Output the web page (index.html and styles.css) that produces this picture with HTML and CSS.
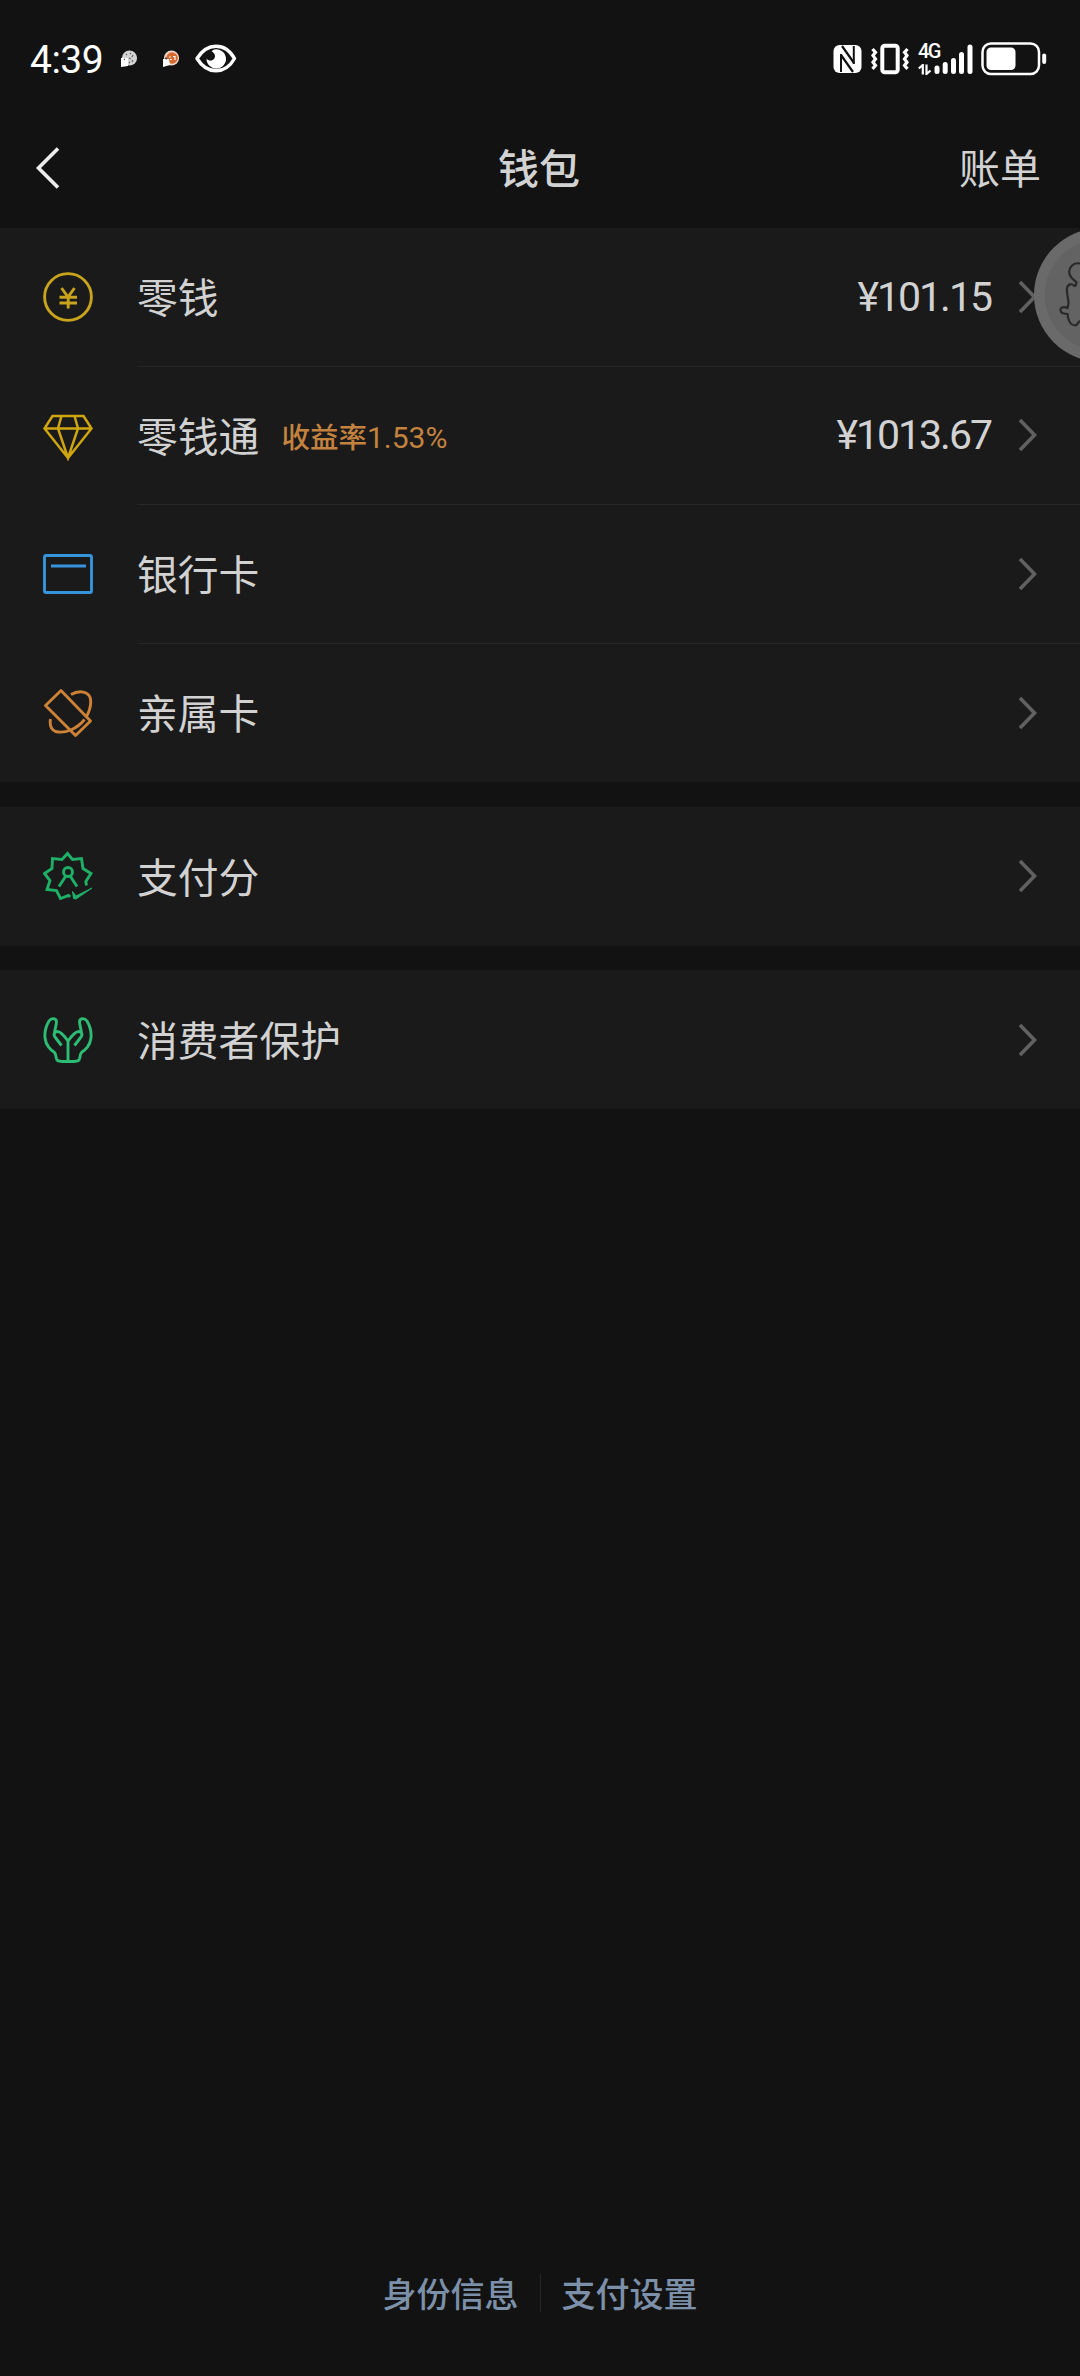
FILE: index.html
```
<!DOCTYPE html>
<html lang="zh-CN">
<head>
    <meta charset="UTF-8">
    <meta name="viewport" content="width=device-width, initial-scale=1.0">
    <title>钱包</title>
    <link rel="stylesheet" href="styles.css">
</head>
<body>
    <svg class="defs" width="0" height="0">
        <symbol id="arrow" viewBox="0 0 20 34">
            <path d="M2 2 L16.500 17 L2 32" fill="none" stroke="currentColor" stroke-width="3.600"/>
        </symbol>
    </svg>

    <div class="screen">
        <div class="status-bar">
            <div class="status-left">
                <span class="time">4:39</span>
                <svg class="notify" width="18" height="18" viewBox="0 0 18 18">
                    <circle cx="9.500" cy="8" r="7.600" fill="#d4d4d4"/>
                    <path d="M1 8h7v8l-7 1z" fill="#fff"/>
                    <path d="M6 4l1 1M10 3l1 1M13 5l-1 2M9 8l2 1M13 10l-1 2M4 9l1 1M9 12l1 1" stroke="#666" stroke-width="1.300"/>
                </svg>
                <svg class="notify" width="18" height="18" viewBox="0 0 18 18">
                    <circle cx="9.500" cy="8" r="7.600" fill="#f0d8cc"/>
                    <circle cx="10" cy="8" r="5.800" fill="#d9682e"/>
                    <path d="M1 9h6l1 6-7 2z" fill="#fff"/>
                    <path d="M7 7h2M11 6.500h2v3.500M8 9.500h2" stroke="#fff" stroke-width="1.200" fill="none"/>
                    <path d="M3 8l2 1" stroke="#444" stroke-width="1.500"/>
                </svg>
                <svg class="eye" width="42" height="30" viewBox="0 0 42 30">
                    <path d="M2 14.500C7 6.500 13.500 2.200 21 2.200S35 6.500 39.500 14.500C35 22.500 28.500 26.800 21 26.800S7 22.500 2 14.500Z" fill="none" stroke="#fff" stroke-width="3.400" stroke-linejoin="round"/>
                    <path d="M19 5.500A9.700 9.700 0 1 1 11.600 14.500C13.500 17.800 18.800 17 19.800 13.500C20.700 10.500 18.600 8.500 16.500 7.200Z" fill="#fff"/>
                </svg>
            </div>
            <div class="status-right">
                <svg width="29" height="30" viewBox="0 0 29 30">
                    <rect x="0.500" y="1" width="28" height="28" rx="6" fill="#fff"/>
                    <path d="M8 10V28M20.800 2V20" stroke="#121212" stroke-width="2"/>
                    <path d="M9 2L21 19M8 11L20 28" stroke="#121212" stroke-width="2.200"/>
                </svg>
                <svg class="vibrate" width="38" height="32" viewBox="0 0 38 32">
                    <rect x="11.300" y="2.800" width="15.400" height="26.400" rx="2.500" fill="none" stroke="#fff" stroke-width="4"/>
                    <path d="M1.500 6l3 3.300-2.500 3.300 2.500 3.300-2.500 3.300 2.500 3.300-3 3.300M36.500 6l-3 3.300 2.500 3.300-2.500 3.300 2.500 3.300-2.500 3.300 3 3.300" fill="none" stroke="#fff" stroke-width="3.200"/>
                </svg>
                <div class="signal">
                    <div class="network">
                        <span class="network-type">4G</span>
                        <svg width="14" height="11" viewBox="0 0 14 11">
                            <path d="M0.800 4.500L4.800 1V10.500M8.500 0.500V10L12.500 6.500" fill="none" stroke="#fff" stroke-width="2.200"/>
                        </svg>
                    </div>
                    <svg width="40" height="32" viewBox="0 0 40 32">
                        <path d="M4 25V28.500M12.200 21.500V28.500M20.500 17.500V28.500M28.500 11.500V28.500M37 4V28.500" stroke="#fff" stroke-width="5" stroke-linecap="round"/>
                    </svg>
                </div>
                <svg class="battery" width="66" height="34" viewBox="0 0 66 34">
                    <rect x="1.500" y="1.500" width="56.500" height="30.500" rx="8.500" fill="none" stroke="#fff" stroke-width="2.500"/>
                    <rect x="5.500" y="5.500" width="29" height="22.500" rx="4.500" fill="#fff"/>
                    <path d="M63.200 13.500V20" stroke="#fff" stroke-width="4" stroke-linecap="round"/>
                </svg>
            </div>
        </div>

        <header class="nav">
            <svg class="back" width="26" height="44" viewBox="0 0 26 44">
                <path d="M23 2.500L3.500 22L23 41.500" fill="none" stroke="#ededed" stroke-width="3.600"/>
            </svg>
            <h1 class="title">钱包</h1>
            <a class="bill">账单</a>
        </header>

        <main>
            <section class="group">
                <div class="row">
                    <svg class="icon" viewBox="0 0 50 50" stroke="#c8a41c">
                        <circle cx="25" cy="25" r="23.400"/>
                        <path d="M18.500 16l6.500 9 6.500-9M16.500 25.300h17.500M16.500 31h17.500M25.200 25v11.500"/>
                    </svg>
                    <div class="cell">
                        <span class="label">零钱</span>
                        <span class="amount">¥101.15</span>
                        <svg class="arrow"><use href="#arrow"/></svg>
                    </div>
                </div>
                <div class="row">
                    <svg class="icon" viewBox="0 0 50 50" stroke="#cfa60f">
                        <path d="M9.500 5h31l8 12.500L25 47 1.500 17.500zM1.500 17.500h47M18.500 5l-3.500 12.500 10 29.500 10-29.500L31.500 5" stroke-width="2.500"/>
                    </svg>
                    <div class="cell">
                        <span class="label">零钱通</span>
                        <span class="tag">收益率<span class="rate">1.53%</span></span>
                        <span class="amount">¥1013.67</span>
                        <svg class="arrow"><use href="#arrow"/></svg>
                    </div>
                </div>
                <div class="row">
                    <svg class="icon" viewBox="0 0 50 50" stroke="#3594dc">
                        <rect x="1.500" y="6.500" width="47" height="37" rx="1.500"/>
                        <path d="M8 17h35"/>
                    </svg>
                    <div class="cell">
                        <span class="label">银行卡</span>
                        <svg class="arrow"><use href="#arrow"/></svg>
                    </div>
                </div>
                <div class="row">
                    <svg class="icon" viewBox="0 0 50 50" stroke="#cd8237">
                        <path d="M18 2.500L47.500 33 32.500 47.500 2.500 17.500z" stroke-linejoin="round"/>
                        <path d="M28 6.500C36 2 46 3 47.500 11C48.500 18 46.500 23 43.500 28.500M41.500 31.500C34 41 22 46 12.500 43.500C8 41.500 6.500 37 7.500 31"/>
                    </svg>
                    <div class="cell">
                        <span class="label">亲属卡</span>
                        <svg class="arrow"><use href="#arrow"/></svg>
                    </div>
                </div>
            </section>

            <section class="group">
                <div class="row">
                    <svg class="icon" viewBox="0 0 50 50" stroke="#1fb067">
                        <path d="M43.500 34.500L42.800 30.500L48 22.500L40 17.500L38.500 7.500L29.500 8.500L24.500 2.500L19 8.500L9.500 7.500L9 17.500L1.500 22.500L7 29.500L4 38.500L13.500 39.500L17.500 47.500L25.500 44.500L27 46"/>
                        <circle cx="25" cy="21" r="4.500"/>
                        <path d="M22.500 25.500L16 35.500M27.500 25.500L34 35.500"/>
                        <path d="M29.500 40.500L33 45L49 37L33 48L30.500 47.500z" fill="#1fb067" stroke-width="1"/>
                    </svg>
                    <div class="cell">
                        <span class="label">支付分</span>
                        <svg class="arrow"><use href="#arrow"/></svg>
                    </div>
                </div>
            </section>

            <section class="group">
                <div class="row">
                    <svg class="icon" viewBox="0 0 50 50" stroke="#2cbc73">
                        <path d="M25 46.500V26C21 20.500 17 16.500 14.500 16.500C11.500 16.500 10 19.500 12 22L18.500 30.500M11.500 19.500C11.500 14 13.500 10 13.500 7C13.500 3 8.500 2.500 6 6C3 11 1.500 17 2 23C3 31 7.500 34.500 11.500 37.500C13.500 39.500 12.500 43 14 45C15.500 46.800 19 46.500 25 46.500"/>
                        <path d="M25 26C29 20.500 33 16.500 35.500 16.500C38.500 16.500 40 19.500 38 22L31.500 30.500M38.500 19.500C38.500 14 36.500 10 36.500 7C36.500 3 41.500 2.500 44 6C47 11 48.500 17 48 23C47 31 42.500 34.500 38.500 37.500C36.500 39.500 37.500 43 36 45C34.500 46.800 31 46.500 25 46.500"/>
                    </svg>
                    <div class="cell">
                        <span class="label">消费者保护</span>
                        <svg class="arrow"><use href="#arrow"/></svg>
                    </div>
                </div>
            </section>
        </main>

        <footer class="footer">
            <a>身份信息</a>
            <span class="divider"></span>
            <a>支付设置</a>
        </footer>

        <!-- floating assistive button, half hidden at the screen edge -->
        <div class="float-button">
            <svg width="46" height="134" viewBox="0 0 46 134">
                <circle cx="66.800" cy="67" r="66.800" fill="#6a6a6a"/>
                <circle cx="66.800" cy="67" r="56" fill="#636363"/>
                <path d="M46 35.500C39 34 34 40 35.500 46C36.500 50 40 52 42.500 54.500C42 57 42 58 40.500 58C38 55 34 56 33 60C32.500 65 34 69 34.500 74C34.500 77 34 78 33.500 80C29 78 26 80 26.500 82.500C27 85 30 86 33.500 86C34 92 36 97 41 97.500C44 97 44 94 46 93" fill="none" stroke="#292929" stroke-width="2.200"/>
            </svg>
        </div>
    </div>
</body>
</html>
```
FILE: styles.css
```
* {
    margin: 0;
    padding: 0;
    box-sizing: border-box;
}

body {
    background-color: #121212;
    color: #d2d2d2;
    font-family: "Noto Sans CJK SC", "Noto Sans", sans-serif;
}

svg {
    display: block;
    flex-shrink: 0;
}

.defs {
    position: absolute;
}

.screen {
    position: relative;
    display: flex;
    flex-direction: column;
    width: 1080px;
    height: 2376px;
    overflow: hidden;
}

/* Status bar */
.status-bar {
    display: flex;
    justify-content: space-between;
    height: 108px;
    padding: 10px 33px 0 30px;
    color: #fff;
}

.status-left,
.status-right {
    display: flex;
    align-items: center;
}

.time {
    width: 90px;
    padding-top: 3px;
    font-family: Roboto, sans-serif;
    font-size: 39px;
    line-height: 1;
    letter-spacing: -0.500px;
}

.notify {
    margin-right: 24px;
}

.eye {
    margin-left: -9px;
}

.vibrate {
    margin-left: 9px;
}

.signal {
    display: flex;
    margin-left: 9px;
}

.network {
    width: 15px;
}

.network-type {
    display: block;
    height: 21px;
    font-family: Roboto, sans-serif;
    font-size: 20px;
    font-weight: 500;
    line-height: 17px;
    letter-spacing: -1.500px;
}

.battery {
    margin-left: 8px;
}

/* Navigation */
.nav {
    display: flex;
    align-items: center;
    justify-content: space-between;
    height: 120px;
    padding: 0 39px 0 35px;
}

.back {
    margin-right: 58px;
}

.title,
.bill {
    padding-bottom: 4px;
    font-size: 41px;
}

.title {
    font-weight: 500;
}

.bill {
    font-weight: 400;
}

/* List */
.group {
    margin-bottom: 24.500px;
    background-color: #1a1a1a;
}

.row {
    display: flex;
    align-items: center;
    height: 138.500px;
    padding-left: 43px;
}

.row:only-child {
    height: 139px;
}

.icon {
    width: 50px;
    height: 50px;
    margin-right: 44px;
    fill: none;
    stroke-width: 2.900;
}

.cell {
    display: flex;
    flex: 1;
    align-items: center;
    height: 100%;
    padding-right: 42px;
    border-bottom: 1px solid #262626;
}

.row:last-child .cell {
    border-bottom: none;
}

.label {
    padding-bottom: 2px;
    font-size: 40.800px;
}

.tag {
    margin-left: 22px;
    color: #c4823f;
    font-size: 28.500px;
    font-weight: 500;
}

.rate {
    font-family: Roboto, sans-serif;
    font-size: 30px;
    font-weight: 400;
}

.amount {
    margin-left: auto;
    font-family: Roboto, sans-serif;
    font-size: 41px;
    letter-spacing: -2px;
}

.arrow {
    width: 20px;
    height: 34px;
    margin-left: auto;
    color: #616161;
}

.amount + .arrow {
    margin-left: 27px;
}

/* Footer links */
.footer {
    display: flex;
    align-items: center;
    justify-content: center;
    gap: 21px;
    height: 167px;
    margin-top: auto;
    color: #7d90a9;
    font-size: 34px;
    font-weight: 500;
}

.divider {
    width: 1px;
    height: 38px;
    background-color: #262626;
}

.float-button {
    position: absolute;
    top: 228px;
    right: 0;
}
```
